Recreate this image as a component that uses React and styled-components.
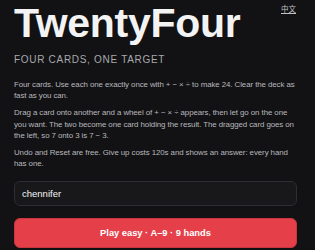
import React, { useState } from "react";
import styled, { createGlobalStyle } from "styled-components";

const GlobalStyle = createGlobalStyle`
  html, body {
    margin: 0;
    padding: 0;
    background: #121214;
  }
  body {
    font-family: "Liberation Sans", Arial, sans-serif;
    color: #e8e8ea;
  }
`;

const Page = styled.div`
  padding: 3px 18px 0 14px;
  display: flex;
  flex-direction: column;
`;

const Header = styled.div`
  display: flex;
  justify-content: space-between;
  align-items: flex-start;
`;

const Title = styled.h1`
  margin: 0;
  font-size: 41px;
  line-height: 41px;
  font-weight: 700;
  letter-spacing: -0.3px;
  color: #f3f3f4;
`;

const LangLink = styled.a`
  font-family: "Noto Sans CJK SC", sans-serif;
  font-size: 7.5px;
  line-height: 10px;
  margin-top: 1px;
  margin-right: 1px;
  color: #c2c2c6;
  text-decoration: underline;
`;

const Subtitle = styled.div`
  margin-top: 10.4px;
  font-size: 10px;
  line-height: 12px;
  letter-spacing: 0.7px;
  color: #a9a9ae;
  text-transform: uppercase;
`;

const Intro = styled.div`
  margin-top: 12.3px;
  display: flex;
  flex-direction: column;
  gap: 5.6px;
`;

const Para = styled.p`
  margin: 0;
  font-size: 7.9px;
  line-height: 11.4px;
  letter-spacing: -0.08px;
  color: #b8b8bd;
`;

const NameInput = styled.input`
  margin-top: 11.5px;
  box-sizing: border-box;
  height: 25px;
  width: 100%;
  padding: 0 7px;
  border-radius: 6px;
  border: 1px solid #2d2d32;
  background: #18181b;
  color: #f4f4f5;
  font-family: "Liberation Sans", Arial, sans-serif;
  font-size: 9.5px;
  outline: none;
`;

const PlayButton = styled.button`
  margin-top: 12px;
  box-sizing: border-box;
  height: 30px;
  width: 100%;
  border: 1px solid #c93640;
  border-radius: 6px;
  background: #e5404a;
  color: #fff;
  font-family: "Liberation Sans", Arial, sans-serif;
  font-size: 9.3px;
  font-weight: 700;
  cursor: pointer;
`;

export default function App() {
  const [name, setName] = useState("chennifer");

  return (
    <>
      <GlobalStyle />
      <Page>
        <Header>
          <Title>TwentyFour</Title>
          <LangLink href="#">中文</LangLink>
        </Header>
        <Subtitle>Four cards, one target</Subtitle>
        <Intro>
          <Para>
            Four cards. Use each one exactly once with + − × ÷ to make 24. Clear the deck as fast as you can.
          </Para>
          <Para>
            Drag a card onto another and a wheel of + − × ÷ appears, then let go on the one you want. The two
            become one card holding the result. The dragged card goes on the left, so 7 onto 3 is 7 − 3.
          </Para>
          <Para>
            Undo and Reset are free. Give up costs 120s and shows an answer: every hand has one.
          </Para>
        </Intro>
        <NameInput value={name} onChange={(e) => setName(e.target.value)} />
        <PlayButton>Play easy · A–9 · 9 hands</PlayButton>
      </Page>
    </>
  );
}
